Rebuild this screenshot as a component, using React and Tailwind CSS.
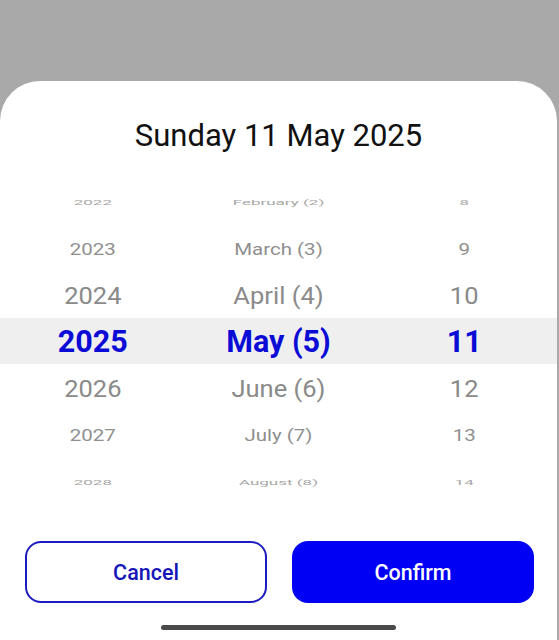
import React from "react";

const years = ["2022", "2023", "2024", "2025", "2026", "2027", "2028"];
const months = ["February (2)", "March (3)", "April (4)", "May (5)", "June (6)", "July (7)", "August (8)"];
const days = ["8", "9", "10", "11", "12", "13", "14"];

// style per distance from the selected row (wheel perspective)
const rowStyles = [
  "text-[17px] scale-y-[0.42] text-[#a6a6a6]",
  "text-[20.5px] scale-y-[0.78] text-[#8f8f8f]",
  "text-[25.5px] scale-y-[0.95] text-[#8a8a8a]",
  "text-[30.5px] font-bold text-[#0b0bd6]",
];

function WheelColumn({ items }) {
  return (
    <div className="flex flex-col">
      {items.map((item, i) => {
        const dist = Math.abs(i - 3);
        return (
          <div key={item} className="h-[46.67px] pt-[2px] flex items-center justify-center">
            <span className={"block leading-none whitespace-nowrap " + rowStyles[3 - dist]}>{item}</span>
          </div>
        );
      })}
    </div>
  );
}

export default function App() {
  return (
    <div className="w-[559px] h-[640px] bg-[#aaa9aa] flex flex-col overflow-hidden" style={{ fontFamily: "Roboto, 'Noto Sans', sans-serif" }}>
      <div className="h-[81px] shrink-0"></div>
      <div className="w-[557px] flex-1 bg-white rounded-t-[40px] flex flex-col">
        <h1 className="pt-[37px] text-center text-[31px] leading-[36px] text-[#111]">Sunday 11 May 2025</h1>
        <div className="relative mt-[24px]">
          <div className="absolute left-0 right-0 top-[140px] h-[46px] bg-[#efefef]"></div>
          <div className="relative grid grid-cols-3">
            <WheelColumn items={years} />
            <WheelColumn items={months} />
            <WheelColumn items={days} />
          </div>
        </div>
        <div className="mt-[36px] pl-[25px] flex gap-[25px]">
          <button className="w-[242px] h-[62px] pt-[3px] rounded-[16px] border-2 border-[#1c1cc0] bg-white text-[#1616b8] text-[21.5px] font-medium">
            Cancel
          </button>
          <button className="w-[242px] h-[62px] pt-[3px] rounded-[16px] bg-[#0000f5] text-white text-[21.5px] font-medium">
            Confirm
          </button>
        </div>
        <div className="mt-[22px] mx-auto w-[235px] h-[5px] rounded-full bg-[#4a4a4a]"></div>
      </div>
    </div>
  );
}
